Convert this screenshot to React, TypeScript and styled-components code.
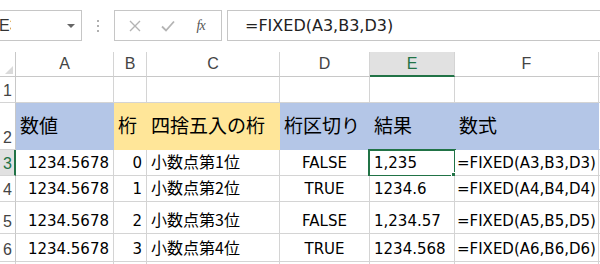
import styled, { createGlobalStyle, css } from "styled-components";

const GlobalStyle = createGlobalStyle`
  body {
    margin: 0;
    background: #ffffff;
    font-family: "DejaVu Sans", "Noto Sans CJK JP", sans-serif;
  }
`;

const GREEN = "#217346";
const GRID = "#d4d4d4";
const BLUE = "#b4c6e7";
const YELLOW = "#ffe699";

const Page = styled.div`
  width: 600px;
  height: 264px;
  overflow: hidden;
  background: #fff;
`;

// 数式バー
const FormulaRow = styled.div`
  display: flex;
  align-items: center;
  height: 52px;
  padding-bottom: 11px;
  padding-top: 10px;
  box-sizing: border-box;
`;

const NameBox = styled.div`
  width: 82px;
  height: 31px;
  box-sizing: border-box;
  border: 1px solid #c6c6c6;
  border-left: none;
  display: flex;
  align-items: center;
  justify-content: space-between;
  padding-right: 6px;
`;

// 名前ボックスは左端で切れている
const NameClip = styled.div`
  width: 11px;
  overflow: hidden;
  display: flex;
  justify-content: flex-start;
  font-family: "Liberation Sans", sans-serif;
  font-size: 16px;
  color: #333;
  white-space: nowrap;
`;

const NameText = styled.span`
  margin-left: -1px;
`;

const DropArrow = styled.div`
  width: 0;
  height: 0;
  border-left: 4px solid transparent;
  border-right: 4px solid transparent;
  border-top: 4px solid #666;
`;

const Dots = styled.div`
  width: 32px;
  display: flex;
  flex-direction: column;
  align-items: center;
  gap: 3px;
  span {
    width: 2px;
    height: 2px;
    background: #b0b0b0;
  }
`;

const ButtonGroup = styled.div`
  width: 108px;
  height: 31px;
  box-sizing: border-box;
  border: 1px solid #c6c6c6;
  display: flex;
  align-items: center;
  justify-content: space-around;
  padding: 0 4px;
`;

const IconSlot = styled.div`
  width: 20px;
  display: flex;
  justify-content: center;
  align-items: center;
`;

const Fx = styled.span`
  font-family: "Liberation Serif", serif;
  font-style: italic;
  font-size: 14px;
  color: #555;
  letter-spacing: -1px;
`;

const FormulaInput = styled.div`
  flex: 1;
  height: 31px;
  box-sizing: border-box;
  border: 1px solid #c6c6c6;
  border-right: none;
  margin-left: 5px;
  display: flex;
  align-items: center;
  padding-left: 17px;
  font-family: "DejaVu Sans", sans-serif;
  font-size: 16px;
  color: #222;
`;

// シート
const Sheet = styled.div`
  display: grid;
  grid-template-columns: 16px 98px 33px 133px 90px 85px 144px 1fr;
  grid-template-rows: 25px 26px 47px 26px 26px 32px 28px 20px;
`;

const Corner = styled.div`
  border-right: 1px solid #c8c8c8;
  border-bottom: 1px solid #c8c8c8;
  box-sizing: border-box;
  display: flex;
  align-items: flex-end;
  justify-content: flex-end;
  padding: 0 2px 2px 0;
`;

const CornerTri = styled.div`
  width: 0;
  height: 0;
  border-left: 8px solid transparent;
  border-bottom: 8px solid #dadada;
`;

const ColHead = styled.div<{ $active?: boolean }>`
  box-sizing: border-box;
  border-right: 1px solid ${GRID};
  border-bottom: 1px solid #c8c8c8;
  display: flex;
  align-items: center;
  justify-content: center;
  font-family: "Liberation Sans", sans-serif;
  font-size: 16px;
  color: #444;
  ${(p) =>
    p.$active &&
    css`
      background: #e1e1e1;
      border-bottom: 2px solid ${GREEN};
      color: ${GREEN};
      padding-top: 1px;
    `}
`;

const RowHead = styled.div<{ $active?: boolean }>`
  box-sizing: border-box;
  border-right: 1px solid #c8c8c8;
  border-bottom: 1px solid ${GRID};
  display: flex;
  align-items: flex-end;
  padding: 0 0 2px 3px;
  font-family: "Liberation Sans", sans-serif;
  font-size: 16px;
  color: #444;
  ${(p) =>
    p.$active &&
    css`
      background: #e1e1e1;
      border-right: 2px solid ${GREEN};
      color: ${GREEN};
    `}
`;

const Cell = styled.div<{
  $fill?: string;
  $align?: "left" | "right" | "center";
  $head?: boolean;
}>`
  box-sizing: border-box;
  border-right: 1px solid ${(p) => p.$fill || GRID};
  border-bottom: 1px solid ${(p) => p.$fill || GRID};
  background: ${(p) => p.$fill || "#fff"};
  display: flex;
  align-items: ${(p) => (p.$head ? "center" : "flex-end")};
  justify-content: ${(p) =>
    p.$align === "right"
      ? "flex-end"
      : p.$align === "center"
      ? "center"
      : "flex-start"};
  padding: ${(p) => (p.$head ? "0 4px 2px 4px" : "0 4px 3px 4px")};
  font-size: 15px;
  color: #000;
  white-space: nowrap;
  overflow: visible;
  position: relative;
`;

const Jp = styled.span<{ $big?: boolean }>`
  font-family: "Noto Sans CJK JP", sans-serif;
  font-size: ${(p) => (p.$big ? "19px" : "16px")};
  line-height: ${(p) => (p.$big ? "24px" : "18px")};
  margin-bottom: ${(p) => (p.$big ? "0" : "2px")};
`;

const Selection = styled.div`
  position: absolute;
  left: -2px;
  top: -1px;
  right: -2px;
  bottom: -2px;
  border: 2px solid ${GREEN};
  pointer-events: none;
`;

const Handle = styled.div`
  position: absolute;
  right: -5px;
  bottom: -5px;
  width: 6px;
  height: 6px;
  background: ${GREEN};
  border: 1px solid #fff;
`;

const rows = [
  { a: "1234.5678", b: "0", c: "小数点第1位", d: "FALSE", e: "1,235", f: "=FIXED(A3,B3,D3)" },
  { a: "1234.5678", b: "1", c: "小数点第2位", d: "TRUE", e: "1234.6", f: "=FIXED(A4,B4,D4)" },
  { a: "1234.5678", b: "2", c: "小数点第3位", d: "FALSE", e: "1,234.57", f: "=FIXED(A5,B5,D5)" },
  { a: "1234.5678", b: "3", c: "小数点第4位", d: "TRUE", e: "1234.568", f: "=FIXED(A6,B6,D6)" },
];

const headers = [
  { text: "数値", fill: BLUE },
  { text: "桁", fill: YELLOW },
  { text: "四捨五入の桁", fill: YELLOW },
  { text: "桁区切り", fill: BLUE },
  { text: "結果", fill: BLUE },
  { text: "数式", fill: BLUE },
];

const cols = ["A", "B", "C", "D", "E", "F", ""];

function App() {
  return (
    <Page>
      <GlobalStyle />
      <FormulaRow>
        <NameBox>
          <NameClip>
            <NameText>E3</NameText>
          </NameClip>
          <DropArrow />
        </NameBox>
        <Dots>
          <span />
          <span />
          <span />
        </Dots>
        <ButtonGroup>
          <IconSlot>
            <svg width="12" height="12" viewBox="0 0 12 12">
              <path d="M1 1 L11 11 M11 1 L1 11" stroke="#b4b4b4" strokeWidth="1.4" fill="none" />
            </svg>
          </IconSlot>
          <IconSlot>
            <svg width="14" height="12" viewBox="0 0 14 12">
              <path d="M1 6.5 L5 10.5 L13 1.5" stroke="#b4b4b4" strokeWidth="1.8" fill="none" />
            </svg>
          </IconSlot>
          <IconSlot>
            <Fx>fx</Fx>
          </IconSlot>
        </ButtonGroup>
        <FormulaInput>=FIXED(A3,B3,D3)</FormulaInput>
      </FormulaRow>

      <Sheet>
        <Corner>
          <CornerTri />
        </Corner>
        {cols.map((c) => (
          <ColHead key={c || "x"} $active={c === "E"}>
            {c}
          </ColHead>
        ))}

        <RowHead>1</RowHead>
        {cols.map((c) => (
          <Cell key={"r1" + c} />
        ))}

        <RowHead>2</RowHead>
        {headers.map((h) => (
          <Cell key={h.text} $fill={h.fill} $head>
            <Jp $big>{h.text}</Jp>
          </Cell>
        ))}
        <Cell />

        {rows.map((r, i) => (
          <Row key={i} idx={i} r={r} />
        ))}
        {cols.concat("").map((c, i) => (
          <Cell key={"tail" + i} />
        ))}
      </Sheet>
    </Page>
  );
}

function Row({ idx, r }: { idx: number; r: (typeof rows)[number] }) {
  const n = String(idx + 3);
  return (
    <>
      <RowHead $active={idx === 0}>{n}</RowHead>
      <Cell $align="right">{r.a}</Cell>
      <Cell $align="right">{r.b}</Cell>
      <Cell>
        <Jp>{r.c}</Jp>
      </Cell>
      <Cell $align="center">{r.d}</Cell>
      <Cell>
        {r.e}
        {idx === 0 && (
          <Selection>
            <Handle />
          </Selection>
        )}
      </Cell>
      <Cell style={{ paddingLeft: 2 }}>{r.f}</Cell>
      <Cell />
    </>
  );
}

export default App;
